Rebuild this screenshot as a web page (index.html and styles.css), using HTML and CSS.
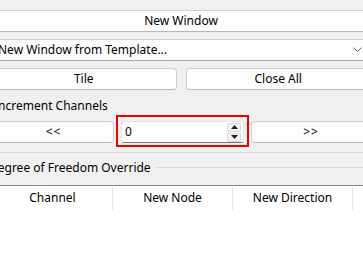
FILE: index.html
```html
<!DOCTYPE html>
<html>
<head>
<meta charset="utf-8">
<link rel="stylesheet" href="styles.css">
</head>
<body>
<div class="panel">
  <button class="btn wide">New Window</button>
  <div class="combo">
    <span class="combo-text">New Window from Template...</span>
    <svg class="chev" width="9" height="6" viewBox="0 0 9 6"><polyline points="0.5,0.5 4.5,4.5 8.5,0.5" fill="none" stroke="#606060" stroke-width="1"/></svg>
  </div>
  <div class="pair">
    <button class="btn">Tile</button>
    <button class="btn">Close All</button>
  </div>
  <div class="label">Increment Channels</div>
  <div class="triple">
    <button class="btn arrows-txt">&lt;&lt;</button>
    <div class="spin">
      <span class="spin-val">0</span>
      <div class="arrows">
        <div class="arrow"><svg width="7" height="4" viewBox="0 0 7 4"><polygon points="3.5,0 7,4 0,4" fill="#202020"/></svg></div>
        <div class="arrow"><svg width="7" height="4" viewBox="0 0 7 4"><polygon points="0,0 7,0 3.5,4" fill="#202020"/></svg></div>
      </div>
    </div>
    <button class="btn arrows-txt">&gt;&gt;</button>
  </div>
  <div class="sep"></div>
  <div class="group-title"><span class="group-text">Degree of Freedom Override</span><div class="group-line"></div></div>
  <div class="table">
    <div class="thead">
      <div class="th">Channel</div>
      <div class="th">New Node</div>
      <div class="th">New Direction</div>
      <div class="th"></div>
    </div>
  </div>
</div>
</body>
</html>
```
FILE: styles.css
```css
html, body {
  margin: 0;
  padding: 0;
  background: #f0f0f0;
  overflow: hidden;
  width: 363px;
  height: 262px;
}
.panel {
  width: 380px;
  margin-left: -9px;
  padding-top: 10px;
  display: flex;
  flex-direction: column;
  font-family: "Noto Sans", "Segoe UI", sans-serif;
  font-size: 12px;
  line-height: 16px;
  color: #000;
}
.btn {
  font: inherit;
  color: #000;
  height: 22px;
  padding: 0;
  background: #fdfdfd;
  border: 1px solid #d0d0d0;
  border-bottom-color: #b8b8b8;
  border-radius: 4px;
  box-sizing: border-box;
  display: flex;
  align-items: center;
  justify-content: center;
}
.arrows-txt { letter-spacing: 1px; }
.wide { width: 100%; }
.combo {
  margin-top: 7px;
  height: 22px;
  box-sizing: border-box;
  background: #fdfdfd;
  border: 1px solid #d0d0d0;
  border-bottom-color: #a8a8a8;
  border-radius: 4px;
  display: flex;
  align-items: center;
  padding-left: 6px;
  padding-right: 8px;
}
.combo-text { flex: 1; }
.chev { display: block; }
.pair {
  margin-top: 7px;
  display: flex;
  gap: 9px;
}
.pair .btn { flex: 1; }
.label {
  margin-top: 8px;
  padding-left: 3px;
}
.triple {
  margin-top: 7px;
  display: grid;
  grid-template-columns: 121px 123px 120px;
  column-gap: 7px;
  padding-left: 2px;
}
.spin {
  position: relative;
  height: 22px;
  box-sizing: border-box;
  background: #fff;
  border: 1px solid #e6e6e6;
  border-bottom-color: #7a7a7a;
  border-radius: 3px;
  display: flex;
  align-items: center;
  padding-left: 3px;
  padding-right: 2px;
}
.spin::after {
  content: "";
  position: absolute;
  left: -6px;
  right: -6px;
  top: -7px;
  bottom: -5px;
  border: 2px solid #ee0000;
}
.spin-val { flex: 1; }
.arrows {
  display: flex;
  flex-direction: column;
  gap: 1px;
}
.arrow {
  width: 14px;
  height: 9px;
  box-sizing: border-box;
  background: #f3f3f3;
  border: 1px solid #d6d6d6;
  border-radius: 2px;
  display: flex;
  align-items: center;
  justify-content: center;
}
.arrow svg { display: block; }
.sep {
  margin-top: 9px;
  height: 1px;
  background: #d9d9d9;
}
.group-title {
  margin-top: 7px;
  display: flex;
  align-items: center;
  gap: 4px;
}
.group-text { margin-left: -2px; }
.group-line {
  flex: 1;
  height: 1px;
  background: #d9d9d9;
  margin-top: -1px;
}
.table {
  margin-top: 9px;
  border-top: 1px solid #8a8a8a;
  background: #fff;
  height: 100px;
}
.thead {
  display: flex;
  height: 24px;
  padding-left: 2px;
}
.th {
  width: 119px;
  border-right: 1px solid #e3e3e3;
  display: flex;
  align-items: center;
  justify-content: center;
  flex-shrink: 0;
}
```
